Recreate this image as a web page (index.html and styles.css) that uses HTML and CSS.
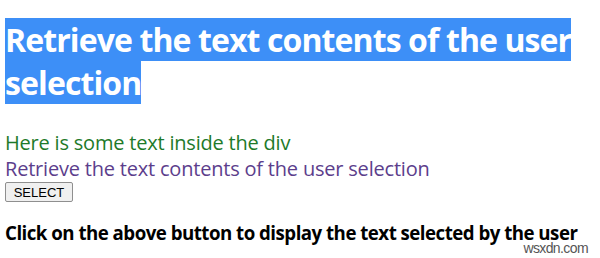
FILE: index.html
```html
<!DOCTYPE html>
<html lang="en">
<head>
    <meta charset="UTF-8">
    <title>Selection</title>
    <link rel="stylesheet" href="styles.css">
</head>
<body>
    <h1><span class="picked">Retrieve the text contents of the user selection</span></h1>
    <div class="sample">Here is some text inside the div</div>
    <div class="title">Retrieve the text contents of the user selection</div>
    <button class="select-btn">SELECT</button>
    <h3>Click on the above button to display the text selected by the user</h3>
    <div class="watermark">wsxdn.com</div>
</body>
</html>
```

FILE: styles.css
```css
* {
    margin: 0;
    padding: 0;
    box-sizing: border-box;
}

html, body {
    height: 100%;
    overflow: hidden;
}

body {
    font-family: "Open Sans", "Noto Sans", sans-serif;
    background-color: #fff;
    padding: 19px 5px 0 5px;
    position: relative;
}

h1 {
    font-size: 32px;
    line-height: 42.5px;
    font-weight: bold;
    letter-spacing: -0.9px;
    color: #fff;
}

.picked {
    background-color: #3d8ff7;
}

.sample {
    margin-top: 25px;
    font-size: 20px;
    line-height: 27px;
    letter-spacing: -0.2px;
    font-weight: 500;
    color: #1e7a2a;
}

.title {
    font-size: 20px;
    line-height: 26px;
    letter-spacing: -0.2px;
    font-weight: 500;
    color: #5c3e8c;
}

.select-btn {
    display: block;
    font-family: "Liberation Sans", Arial, sans-serif;
    font-size: 13px;
    padding: 1px 6px;
    height: 20px;
    width: 68px;
    background: #f0f0f0;
    border: 1px solid #8f8f8f;
    border-radius: 2px;
    color: #000;
}

h3 {
    margin-top: 18px;
    font-size: 18.7px;
    line-height: 25px;
    letter-spacing: -0.52px;
    color: #000;
}

.watermark {
    position: absolute;
    right: 12px;
    bottom: 2px;
    font-family: "Liberation Sans", Arial, sans-serif;
    font-size: 14px;
    letter-spacing: -0.6px;
    color: #555;
}
```
